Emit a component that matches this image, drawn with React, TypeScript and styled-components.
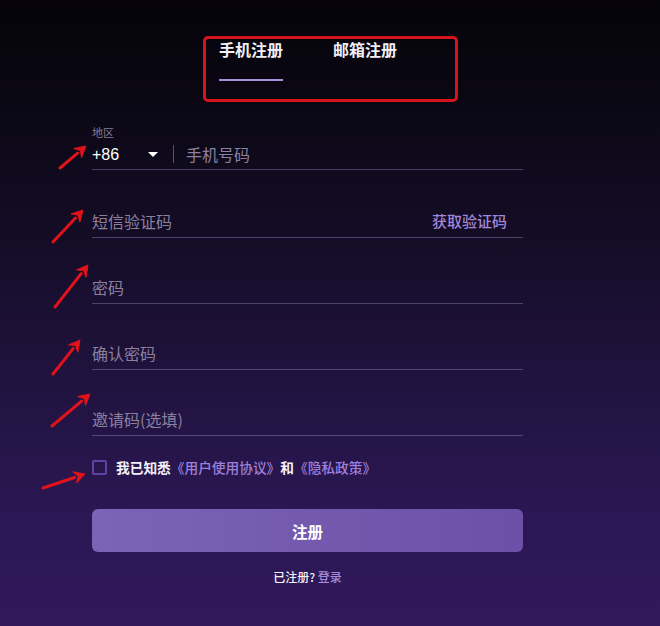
import * as React from 'react';
import styled, { createGlobalStyle } from 'styled-components';

const GlobalStyle = createGlobalStyle`
  html, body {
    margin: 0;
    padding: 0;
    background: #07050d;
  }
  body {
    font-family: 'Liberation Sans', 'Noto Sans CJK SC', sans-serif;
  }
`;

const Page = styled.div`
  position: relative;
  box-sizing: border-box;
  width: 660px;
  height: 626px;
  padding-top: 36px;
  overflow: hidden;
  background: linear-gradient(
    180deg,
    #050309 0%,
    #0b0815 18%,
    #150d28 40%,
    #211340 62%,
    #2b1753 82%,
    #30195c 100%
  );
`;

const TabsFrame = styled.div`
  box-sizing: border-box;
  display: flex;
  align-items: flex-start;
  margin-left: 203px;
  width: 255px;
  height: 66px;
  padding-left: 13px;
  padding-top: 1px;
  border: 3px solid #d6141c;
  border-radius: 5px;
`;

const Tab = styled.div<{ active?: boolean }>`
  font-size: 16px;
  line-height: 22px;
  font-weight: 700;
  color: #f2eff7;
  padding-bottom: 17px;
  border-bottom: 2px solid ${(p) => (p.active ? '#a58fd8' : 'transparent')};
  & + & {
    margin-left: 50px;
  }
`;

const Form = styled.div`
  margin-left: 92px;
  width: 431px;
  margin-top: 25px;
`;

const Field = styled.div<{ gap?: number }>`
  margin-top: ${(p) => p.gap ?? 32}px;
`;

const SmallLabel = styled.div`
  font-size: 11px;
  line-height: 12px;
  color: #857d96;
`;

const Row = styled.div<{ h?: number }>`
  display: flex;
  align-items: center;
  height: ${(p) => p.h ?? 34}px;
  border-bottom: 1px solid rgba(170, 150, 210, 0.38);
  box-sizing: border-box;
`;

const Code = styled.span`
  font-size: 16px;
  color: #ffffff;
  width: 56px;
  padding-top: 2px;
`;

const Caret = styled.span`
  width: 0;
  height: 0;
  border-left: 5px solid transparent;
  border-right: 5px solid transparent;
  border-top: 5px solid #ffffff;
  margin-right: 15px;
`;

const Divider = styled.span`
  width: 1px;
  height: 18px;
  background: #5a526a;
  margin-right: 12px;
`;

const Placeholder = styled.span`
  flex: 1;
  font-family: 'Noto Sans CJK SC', sans-serif;
  font-size: 16px;
  color: #8b809f;
`;

const SideLink = styled.span`
  font-family: 'Noto Sans CJK SC', sans-serif;
  font-size: 15px;
  font-weight: 500;
  color: #a287d8;
  margin-right: 16px;
`;

const Agree = styled.div`
  display: flex;
  align-items: center;
  height: 15px;
  line-height: 15px;
  margin-top: 24px;
  font-family: 'Noto Sans CJK SC', sans-serif;
  font-size: 13.7px;
  font-weight: 700;
  color: #f4f1f8;
`;

const Box = styled.span`
  box-sizing: border-box;
  width: 15px;
  height: 15px;
  border: 2px solid #5d43a3;
  border-radius: 2px;
  margin-right: 9px;
`;

const Link = styled.span`
  color: #9e80dc;
  font-weight: 500;
`;

const Submit = styled.button`
  display: block;
  width: 100%;
  height: 43px;
  margin-top: 34px;
  border: none;
  border-radius: 6px;
  background: linear-gradient(90deg, #7b64b6 0%, #6b50a7 100%);
  color: #ffffff;
  font-family: 'Noto Sans CJK SC', sans-serif;
  font-size: 15.5px;
  font-weight: 700;
`;

const Footer = styled.div`
  margin-top: 17px;
  text-align: center;
  font-family: 'Noto Sans CJK SC', sans-serif;
  font-size: 12px;
  line-height: 16px;
  color: #f4f1f8;
  font-weight: 500;
`;

const FooterLink = styled.span`
  color: #a58bd6;
`;

const Overlay = styled.svg`
  position: absolute;
  left: 0;
  top: 0;
  pointer-events: none;
`;

const arrows: [number, number, number, number][] = [
  [60, 168, 86, 146],
  [53, 242, 83, 210],
  [55, 307, 88, 265],
  [53, 374, 80, 340],
  [52, 426, 90, 394],
  [43, 488, 85, 474],
];

const Arrow = ({ x1, y1, x2, y2 }: { x1: number; y1: number; x2: number; y2: number }) => {
  const a = Math.atan2(y2 - y1, x2 - x1);
  const len = 11;
  const w = 6;
  const bx = x2 - len * Math.cos(a);
  const by = y2 - len * Math.sin(a);
  const px = -Math.sin(a) * w;
  const py = Math.cos(a) * w;
  return (
    <g>
      <line x1={x1} y1={y1} x2={bx} y2={by} stroke="#e0121a" strokeWidth={3} strokeLinecap="round" />
      <polygon
        points={`${x2},${y2} ${bx + px},${by + py} ${bx + 0.35 * (x2 - bx)},${by + 0.35 * (y2 - by)} ${bx - px},${by - py}`}
        fill="#e0121a"
        stroke="#e0121a"
        strokeWidth={1}
        strokeLinejoin="round"
      />
    </g>
  );
};

export default function App() {
  return (
    <Page>
      <GlobalStyle />
      <TabsFrame>
        <Tab active>手机注册</Tab>
        <Tab>邮箱注册</Tab>
      </TabsFrame>
      <Form>
        <Field gap={0}>
          <SmallLabel>地区</SmallLabel>
          <Row h={31}>
            <Code>+86</Code>
            <Caret />
            <Divider />
            <Placeholder>手机号码</Placeholder>
          </Row>
        </Field>
        <Field gap={34}>
          <Row>
            <Placeholder>短信验证码</Placeholder>
            <SideLink>获取验证码</SideLink>
          </Row>
        </Field>
        <Field>
          <Row>
            <Placeholder>密码</Placeholder>
          </Row>
        </Field>
        <Field>
          <Row>
            <Placeholder>确认密码</Placeholder>
          </Row>
        </Field>
        <Field>
          <Row>
            <Placeholder>邀请码(选填)</Placeholder>
          </Row>
        </Field>
        <Agree>
          <Box />
          我已知悉<Link>《用户使用协议》</Link>和<Link>《隐私政策》</Link>
        </Agree>
        <Submit>注册</Submit>
        <Footer>
          已注册? <FooterLink>登录</FooterLink>
        </Footer>
      </Form>
      <Overlay width={660} height={626} viewBox="0 0 660 626">
        {arrows.map(([x1, y1, x2, y2], i) => (
          <Arrow key={i} x1={x1} y1={y1} x2={x2} y2={y2} />
        ))}
      </Overlay>
    </Page>
  );
}
